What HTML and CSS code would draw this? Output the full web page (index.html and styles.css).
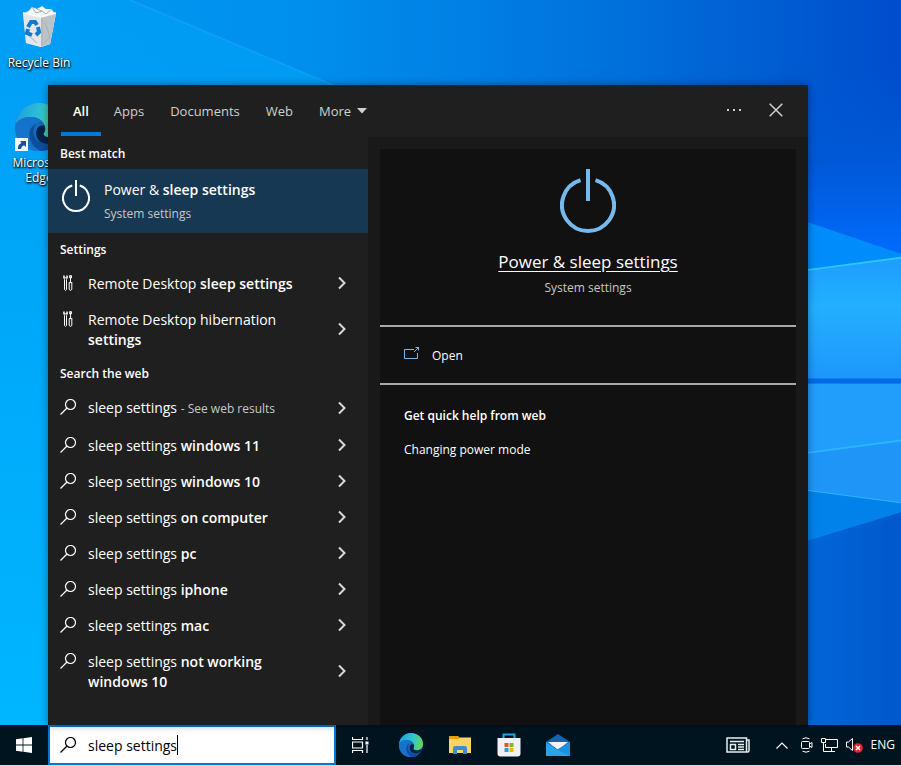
FILE: index.html
```html
<!DOCTYPE html>
<html lang="en">
<head>
    <meta charset="utf-8">
    <title>Search</title>
    <link rel="stylesheet" href="styles.css">
</head>
<body>
    <!-- shared icons -->
    <svg class="defs" aria-hidden="true">
        <defs>
            <linearGradient id="edge-base" x1="0" y1="0.6" x2="1" y2="0.9">
                <stop offset="0" stop-color="#1b7fd6"/>
                <stop offset="1" stop-color="#0c4a94"/>
            </linearGradient>
            <linearGradient id="edge-top" x1="0" y1="0.4" x2="1" y2="0.6">
                <stop offset="0" stop-color="#1c9fe0"/>
                <stop offset="0.5" stop-color="#2fc3d2"/>
                <stop offset="1" stop-color="#62d957"/>
            </linearGradient>
        </defs>
        <symbol id="i-power" viewBox="0 0 56 64">
            <path d="M28 0V32M20.500 11.100A26 26 0 1 0 35.500 11.100" fill="none" stroke="currentColor" stroke-width="4"/>
        </symbol>
        <symbol id="i-search" viewBox="0 0 16 16">
            <circle cx="10.500" cy="5.500" r="5" fill="none" stroke="currentColor" stroke-width="1.200"/>
            <path d="M7 9L.5 15.500" stroke="currentColor" stroke-width="1.200"/>
        </symbol>
        <symbol id="i-tools" viewBox="0 0 10 16">
            <path d="M1 .6Q.4 3 1.500 4.500V14.500Q2.500 16.200 3.500 14.500V4.500Q4.800 3 4 .6V2.800H1Z M7.500 5.500V1.500M6.500 .7H8.600L8.300 3H6.800ZM7.500 3V7.500M5.800 7.600H9.300M6.200 8V14.500Q7.500 16.200 8.800 14.500V8" fill="none" stroke="currentColor"/>
        </symbol>
        <symbol id="i-chevron" viewBox="0 0 8 14">
            <path d="M1 1.500L6.500 7L1 12.500" fill="none" stroke="currentColor" stroke-width="2"/>
        </symbol>
        <symbol id="i-edge" viewBox="0 0 24 24">
            <circle cx="12" cy="12" r="12" fill="url(#edge-base)"/>
            <path d="M.1 11C1 4 6 0 12 0C19 0 24 5 24 11C24 15 21 17 18 17C15.500 17 14 16 14.300 15.200C15.200 14.500 15.500 13 15 11.500C14 8.500 11 7 8 7C4 7 1 9 .1 11Z" fill="url(#edge-top)"/>
            <path d="M.1 11C1 8.500 4 7 7.500 7C10.500 7 12.500 8 13.700 9.400C9 9 6.500 12.500 7.200 16.500C7.800 20 10 22.500 13.500 23.900C6 25 -.8 19 .1 11Z" fill="#1673cc"/>
            <path d="M11 10.500C8.500 12 8.400 17 12 19.500C15.500 21.700 19.500 20.600 22 18.500C20 22 17 24 13 24C9.500 22.500 7.500 19.800 7.200 16.500C7 13.500 8.500 11.200 11 10.500Z" fill="#0d4f9e"/>
            <path d="M14.300 15.200C14 16.500 16 17.500 18.500 17.400C20.500 17.200 21.700 16.500 22.500 16C22.900 16.400 22.500 17.600 22 18.500C19.500 20.600 15.500 21 13 19.600C10.600 18 10 14.800 11.200 12.600C12 11.200 13.500 11 14.700 11.400C15.300 13 15.100 14.500 14.300 15.200Z" fill="#06224a"/>
        </symbol>
    </svg>

    <main class="desktop">
        <svg class="wallpaper" viewBox="0 0 901 726" preserveAspectRatio="none" aria-hidden="true">
            <defs>
                <linearGradient id="sky" x1="0" y1="0" x2="1" y2="0">
                    <stop offset="0" stop-color="#009cf3"/>
                    <stop offset="0.35" stop-color="#008eec"/>
                    <stop offset="0.65" stop-color="#0074dd"/>
                    <stop offset="1" stop-color="#004dcb"/>
                </linearGradient>
                <linearGradient id="left-glow" x1="0" y1="0" x2="0" y2="1">
                    <stop offset="0" stop-color="#00a0f6"/>
                    <stop offset="1" stop-color="#00b6ff"/>
                </linearGradient>
                <linearGradient id="right-top" x1="0" y1="0" x2="0" y2="1">
                    <stop offset="0" stop-color="#0055d0" stop-opacity="0"/>
                    <stop offset="0.5" stop-color="#0058d6"/>
                    <stop offset="1" stop-color="#006cff"/>
                </linearGradient>
                <linearGradient id="pane" x1="0" y1="0" x2="0" y2="1">
                    <stop offset="0" stop-color="#1e9cff"/>
                    <stop offset="0.4" stop-color="#22b0ff"/>
                    <stop offset="1" stop-color="#1e96fb"/>
                </linearGradient>
                <linearGradient id="right-low" x1="0" y1="0" x2="1" y2="0">
                    <stop offset="0" stop-color="#006bdc"/>
                    <stop offset="1" stop-color="#0058cc"/>
                </linearGradient>
            </defs>
            <rect width="901" height="726" fill="url(#sky)"/>
            <path d="M0 0H130L340 88V726H0Z" fill="url(#left-glow)" opacity="0.600"/>
            <rect y="85" width="100" height="641" fill="url(#left-glow)"/>
            <path d="M130 0L340 88" stroke="#2fb0ff" stroke-width="2" opacity="0.300"/>
            <rect x="780" y="60" width="121" height="200" fill="url(#right-top)"/>
            <rect x="780" y="500" width="121" height="226" fill="url(#right-low)"/>
            <path d="M780 213L901 254V280H780Z" fill="#008cfa"/>
            <path d="M780 274L901 258V380H780Z" fill="url(#pane)"/>
            <path d="M780 274L901 258" stroke="#29c6ff" stroke-width="2"/>
            <rect x="780" y="379" width="121" height="5" fill="#006be6"/>
            <path d="M780 384H901V504L780 488Z" fill="#219dfc"/>
            <path d="M780 457L901 441V504L780 488Z" fill="#1e96f7"/>
            <path d="M780 457L901 441M780 488L901 504" fill="none" stroke="#29b6ff" stroke-width="2"/>
            <path d="M780 488L901 504V513L780 550Z" fill="#0082ea"/>
        </svg>

        <div class="shortcuts">
            <a class="shortcut" href="#bin">
                <svg width="40" height="46" viewBox="0 0 40 46" aria-hidden="true">
                    <path d="M4 8L12 5L30 4L37 8L31 39L22 42L7 38Z" fill="#d3d8dc"/>
                    <path d="M4 8L22 12L37 8L31 39L22 42L7 38Z" fill="#e4e7e9"/>
                    <path d="M22 12L37 8L31 39L22 42Z" fill="#bcc3c8"/>
                    <path d="M8 8L13 2L18 4L23 1L27 4L33 4L34 8L22 12Z" fill="#f5f6f7"/>
                    <path d="M13 2L17 8L23 6L27 9L33 4M18 4L23 6M23 12V41M26 18L31 32L25 38M9 30L18 38" fill="none" stroke="#a9b0b5"/>
                    <path d="M4 8L22 12L37 8" fill="none" stroke="#fff" stroke-width="1.500"/>
                    <path d="M9 22L12 17H16L18 20M19 22L20 27L17 30M13 30L8 28L9 24" fill="none" stroke="#1479d0" stroke-width="4"/>
                </svg>
                <span>Recycle Bin</span>
            </a>
            <a class="shortcut" href="#edge">
                <svg width="48" height="48" viewBox="0 0 48 48" aria-hidden="true">
                    <use href="#i-edge" width="48" height="48"/>
                    <rect x="0" y="35" width="13" height="13" fill="#f4f6f8"/>
                    <path d="M3 46Q2.500 41.500 6.500 40L5 38H11V44L9 42.300Q6.500 43 6 46Z" fill="#1c4f9c"/>
                </svg>
                <span>Microsoft Edge</span>
            </a>
        </div>

        <section class="flyout">
            <header class="flyout-header">
                <nav class="tabs">
                    <button class="tab active">All</button>
                    <button class="tab">Apps</button>
                    <button class="tab">Documents</button>
                    <button class="tab">Web</button>
                    <button class="tab">More
                        <svg width="10" height="6" viewBox="0 0 10 6" aria-hidden="true"><path d="M0 0H10L5 5.500Z" fill="currentColor"/></svg>
                    </button>
                </nav>
                <button class="header-button" aria-label="Options">
                    <svg width="16" height="2" viewBox="0 0 16 2"><path d="M1 0h2v2H1zM7 0h2v2H7zM13 0h2v2H13z" fill="currentColor"/></svg>
                </button>
                <button class="header-button" aria-label="Close">
                    <svg width="14" height="14" viewBox="0 0 14 14"><path d="M.7 .7L13.300 13.300M13.300 .7L.7 13.300" stroke="currentColor" stroke-width="1.500"/></svg>
                </button>
            </header>

            <div class="flyout-body">
                <div class="results">
                    <h2>Best match</h2>
                    <a class="best" href="#power">
                        <svg width="28" height="32" aria-hidden="true"><use href="#i-power"/></svg>
                        <span class="best-text">
                            <span>Power &amp; <b>sleep settings</b></span>
                            <small>System settings</small>
                        </span>
                    </a>

                    <h2>Settings</h2>
                    <a class="row" href="#r1">
                        <svg class="row-icon" width="16" height="16"><use href="#i-tools"/></svg>
                        <span class="row-text">Remote Desktop <b>sleep settings</b></span>
                        <svg class="chevron" width="8" height="14"><use href="#i-chevron"/></svg>
                    </a>
                    <a class="row" href="#r2">
                        <svg class="row-icon" width="16" height="16"><use href="#i-tools"/></svg>
                        <span class="row-text">Remote Desktop hibernation <b>settings</b></span>
                        <svg class="chevron" width="8" height="14"><use href="#i-chevron"/></svg>
                    </a>

                    <h2>Search the web</h2>
                    <a class="row row-first" href="#w1">
                        <svg class="row-icon" width="16" height="16"><use href="#i-search"/></svg>
                        <span class="row-text">sleep settings <small>- See web results</small></span>
                        <svg class="chevron" width="8" height="14"><use href="#i-chevron"/></svg>
                    </a>
                    <a class="row" href="#w2">
                        <svg class="row-icon" width="16" height="16"><use href="#i-search"/></svg>
                        <span class="row-text">sleep settings <b>windows 11</b></span>
                        <svg class="chevron" width="8" height="14"><use href="#i-chevron"/></svg>
                    </a>
                    <a class="row" href="#w3">
                        <svg class="row-icon" width="16" height="16"><use href="#i-search"/></svg>
                        <span class="row-text">sleep settings <b>windows 10</b></span>
                        <svg class="chevron" width="8" height="14"><use href="#i-chevron"/></svg>
                    </a>
                    <a class="row" href="#w4">
                        <svg class="row-icon" width="16" height="16"><use href="#i-search"/></svg>
                        <span class="row-text">sleep settings <b>on computer</b></span>
                        <svg class="chevron" width="8" height="14"><use href="#i-chevron"/></svg>
                    </a>
                    <a class="row" href="#w5">
                        <svg class="row-icon" width="16" height="16"><use href="#i-search"/></svg>
                        <span class="row-text">sleep settings <b>pc</b></span>
                        <svg class="chevron" width="8" height="14"><use href="#i-chevron"/></svg>
                    </a>
                    <a class="row" href="#w6">
                        <svg class="row-icon" width="16" height="16"><use href="#i-search"/></svg>
                        <span class="row-text">sleep settings <b>iphone</b></span>
                        <svg class="chevron" width="8" height="14"><use href="#i-chevron"/></svg>
                    </a>
                    <a class="row" href="#w7">
                        <svg class="row-icon" width="16" height="16"><use href="#i-search"/></svg>
                        <span class="row-text">sleep settings <b>mac</b></span>
                        <svg class="chevron" width="8" height="14"><use href="#i-chevron"/></svg>
                    </a>
                    <a class="row" href="#w8">
                        <svg class="row-icon" width="16" height="16"><use href="#i-search"/></svg>
                        <span class="row-text">sleep settings <b>not working</b> <b>windows 10</b></span>
                        <svg class="chevron" width="8" height="14"><use href="#i-chevron"/></svg>
                    </a>
                </div>

                <div class="detail">
                    <div class="detail-card">
                        <div class="detail-hero">
                            <svg class="detail-icon" width="56" height="64" aria-hidden="true"><use href="#i-power"/></svg>
                            <a class="detail-title" href="#power">Power &amp; sleep settings</a>
                            <small>System settings</small>
                        </div>
                        <button class="open">
                            <svg width="16" height="12" viewBox="0 0 16 12" aria-hidden="true">
                                <path d="M10 2.500H.5V11.500H13.500V6M10 5L14.500 .5M11.500 .5H14.500V3.500" fill="none" stroke="#76b9ed"/>
                            </svg>
                            Open
                        </button>
                        <div class="help">
                            <h3>Get quick help from web</h3>
                            <a href="#mode">Changing power mode</a>
                        </div>
                    </div>
                </div>
            </div>
        </section>
    </main>

    <footer class="taskbar">
        <button class="start" aria-label="Start">
            <svg width="16" height="16" viewBox="0 0 16 16"><path d="M0 2.300L6.600 1.300V7.600H0ZM7.400 1.200L16 0V7.600H7.400ZM0 8.400H6.600V14.700L0 13.700ZM7.400 8.400H16V16L7.400 14.800Z" fill="#fff"/></svg>
        </button>
        <label class="search">
            <svg width="16" height="16" aria-hidden="true"><use href="#i-search"/></svg>
            <input type="text" value="sleep settings" aria-label="Search">
            <span class="caret"></span>
        </label>
        <button class="task-view" aria-label="Task view">
            <svg width="17" height="16" viewBox="0 0 17 16"><path d="M.5 0V2.500H10.500V0M.5 5H10.500V11H.5ZM.5 16V13.500H10.500V16M15 0V3M15 8V16" fill="none" stroke="#fff" stroke-width="1.200"/><path d="M13.500 4.500h3v3h-3z" fill="#fff"/></svg>
        </button>
        <button class="app" aria-label="Microsoft Edge">
            <svg width="24" height="24"><use href="#i-edge"/></svg>
        </button>
        <button class="app" aria-label="File Explorer">
            <svg width="22" height="20" viewBox="0 0 22 20"><path d="M0 1H9L11 3V6H0Z" fill="#e8a00f"/><path d="M0 4H9L11 2.500H22V18H0Z" fill="#fbd467"/><path d="M4 19V13Q4 11 6 11H16Q18 11 18 13V19H14V15H8V19Z" fill="#3b8bd4"/></svg>
        </button>
        <button class="app" aria-label="Microsoft Store">
            <svg width="24" height="24" viewBox="0 0 24 24"><path d="M6.500 6V1.500H17.500V6" fill="none" stroke="#1fa8e3" stroke-width="2"/><path d="M.5 5H23.500V20.500Q23.500 23.500 20.500 23.500H3.500Q.5 23.500 .5 20.500Z" fill="#f1f1f1"/><path d="M7.500 10h4v4h-4z" fill="#e8502a"/><path d="M12.500 10h4v4h-4z" fill="#7eb82a"/><path d="M7.500 15h4v4h-4z" fill="#1e9fe8"/><path d="M12.500 15h4v4h-4z" fill="#f9b400"/></svg>
        </button>
        <button class="app" aria-label="Mail">
            <svg width="24" height="24" viewBox="0 0 24 24"><path d="M0 9L12 1L24 9V14H0Z" fill="#1363b4"/><path d="M2 9H22L12 17Z" fill="#f4f4f4"/><path d="M0 9L12 17L24 9V23H0Z" fill="#2aa3ea"/><path d="M24 9V23L11 16.500Z" fill="#1c8fde"/></svg>
        </button>

        <div class="tray">
            <button class="news" aria-label="News and interests">
                <svg width="24" height="16" viewBox="0 0 24 16"><path d="M1 15V1H20.500V15H1ZM20.500 3H23V13.500Q23 15 21.500 15H20M4 4.500H18M12 7.500H18M12 10H18M12 12.500H18" fill="none" stroke="#e8edf0" stroke-width="1.500"/><path d="M4.500 7.500h5v5h-5z" fill="none" stroke="#e8edf0" stroke-width="1.500"/></svg>
            </button>
            <button class="more-icons" aria-label="Show hidden icons">
                <svg width="12" height="7" viewBox="0 0 12 7"><path d="M.5 6.500L6 1L11.500 6.500" fill="none" stroke="#fff" stroke-width="1.200"/></svg>
            </button>
            <button aria-label="Meet now">
                <svg width="12" height="16" viewBox="0 0 12 16"><path d="M1.500 4.500H7.500Q8.500 4.500 8.500 5.500V10.500Q8.500 11.500 7.500 11.500H1.500Q.5 11.500 .5 10.500V5.500Q.5 4.500 1.500 4.500ZM8.500 7L11 5.500V10.500L8.500 9M1.500 1.800Q5 -.2 8.500 1.800M1.500 14.200Q5 16.200 8.500 14.200" fill="none" stroke="#fff"/></svg>
            </button>
            <button aria-label="Network">
                <svg width="17" height="14" viewBox="0 0 17 14"><path d="M5 1.500H16.500V9.500H4.500V6M10.500 9.500V13.500M5 13.500H14M.5 .5H4.500V4.500H.5ZM2.500 4.500V13.500H5" fill="none" stroke="#fff"/></svg>
            </button>
            <button aria-label="Volume muted">
                <svg width="17" height="16" viewBox="0 0 17 16"><path d="M.5 5V10H2.500L6.500 13.500V1.500L2.500 5Z" fill="none" stroke="#fff"/><circle cx="12" cy="11" r="4.800" fill="#e5252b"/><path d="M10 9L14 13M14 9L10 13" stroke="#fff" stroke-width="1.300"/></svg>
            </button>
            <button class="lang">ENG</button>
        </div>
    </footer>
</body>
</html>
```
FILE: styles.css
```css
* {
    box-sizing: border-box;
}
body {
    margin: 0;
    height: 100vh;
    display: flex;
    flex-direction: column;
    font-family: "Open Sans", "Noto Sans", sans-serif;
    font-size: 14px;
    line-height: 20px;
    color: #fff;
    overflow: hidden;
}
button {
    border: 0;
    padding: 0;
    background: none;
    color: inherit;
    font: inherit;
}
a {
    color: inherit;
    text-decoration: none;
}
b {
    font-weight: 600;
}
small {
    font-size: 12px;
    color: #c8c8c8;
}
svg {
    display: block;
    flex: none;
}
.defs {
    position: absolute;
    width: 0;
    height: 0;
}

/* desktop */
.desktop {
    position: relative;
    flex: 1;
    min-height: 0;
}
.wallpaper {
    position: absolute;
    width: 100%;
    height: 100%;
}
.shortcuts {
    position: relative;
    display: flex;
    flex-direction: column;
    gap: 33px;
    width: 78px;
    padding-top: 5px;
}
.shortcut {
    display: flex;
    flex-direction: column;
    align-items: center;
    gap: 4px;
    padding: 0 8px;
    font-size: 12px;
    line-height: 15px;
    text-align: center;
    text-shadow: 1px 1px 2px #000, 0 1px 2px #000;
}
.shortcut span {
    white-space: nowrap;
}
.shortcut + .shortcut span {
    white-space: normal;
}

/* search flyout */
.flyout {
    position: absolute;
    top: 85px;
    bottom: 0;
    left: 48px;
    right: 93px;
    display: flex;
    flex-direction: column;
    background: #191919;
    box-shadow: 0 0 8px rgba(0, 0, 0, 0.4);
}
.flyout-header {
    display: flex;
    height: 52px;
    padding: 0 11px 0 13px;
    background: #1f1f1f;
}
.tabs {
    display: flex;
    flex: 1;
    padding-bottom: 1px;
}
.tab {
    display: flex;
    align-items: center;
    gap: 6px;
    padding: 4px 13px 0;
    border-bottom: 4px solid transparent;
    font-size: 13px;
    color: #d0d0d0;
}
.tab.active {
    padding: 4px 12px 0;
    border-color: #0078d7;
    font-weight: 600;
    color: #fff;
}
.header-button {
    display: flex;
    align-items: center;
    justify-content: center;
    width: 42px;
    padding-bottom: 2px;
    color: #d0d0d0;
}
.flyout-body {
    display: flex;
    flex: 1;
    min-height: 0;
}
.results {
    width: 320px;
    background: #1f1f1f;
}
h2,
h3 {
    margin: 0;
    font-size: 12px;
    font-weight: 600;
}
h2 {
    padding: 7px 12px 5px;
}
.best {
    display: flex;
    gap: 14px;
    height: 64px;
    padding: 11px 14px;
    background: #173853;
}
.best-text {
    display: flex;
    flex-direction: column;
    gap: 4px;
}
.row {
    display: flex;
    gap: 12px;
    padding: 9px 22px 7px 12px;
}
.row-first {
    padding-bottom: 8px;
}
.row-icon {
    margin-top: 1px;
}
.row-text {
    flex: 1;
    padding-right: 20px;
}
.chevron {
    align-self: center;
    margin-bottom: 2px;
    color: #d8d8d8;
}

/* detail pane */
.detail {
    flex: 1;
    display: flex;
    padding: 12px 12px 0;
}
.detail-card {
    flex: 1;
    background: #111;
}
.detail-hero {
    display: flex;
    flex-direction: column;
    align-items: center;
    padding: 20px 0 27px;
}
.detail-icon {
    color: #76b9ed;
}
.detail-title {
    margin: 17px 0 4px;
    font-size: 17px;
    line-height: 24px;
    text-decoration: underline;
    text-underline-offset: 3px;
}
.open {
    display: flex;
    align-items: center;
    gap: 12px;
    width: 100%;
    height: 60px;
    padding: 2px 24px 0;
    border-top: 2px solid #a8a8a8;
    border-bottom: 2px solid #a8a8a8;
    font-size: 12px;
}
.open svg {
    margin-bottom: 6px;
}
.help {
    display: flex;
    flex-direction: column;
    gap: 14px;
    padding: 21px 24px;
    font-size: 12px;
}

/* taskbar */
.taskbar {
    display: flex;
    height: 41px;
    background: #001420;
    border-bottom: 1px solid #d6dde2;
}
.taskbar button {
    display: flex;
    align-items: center;
    justify-content: center;
}
.start,
.task-view {
    width: 48px;
}
.task-view {
    margin-right: 2px;
}
.search {
    display: flex;
    align-items: center;
    width: 288px;
    padding-left: 10px;
    border: 2px solid #0078d7;
    background: #fff;
    color: #000;
}
.search input {
    field-sizing: content;
    margin-left: 12px;
    padding: 2px 0 0;
    border: 0;
    outline: 0;
    background: none;
    font: inherit;
    color: #000;
}
.caret {
    width: 1px;
    height: 20px;
    background: #000;
}
.app {
    width: 49px;
}
.tray {
    display: flex;
    align-items: center;
    gap: 8px;
    margin-left: auto;
    padding-right: 6px;
}
.news {
    margin-right: 18px;
}
.more-icons {
    margin-right: 5px;
}
.lang {
    font-size: 12px;
}
```
